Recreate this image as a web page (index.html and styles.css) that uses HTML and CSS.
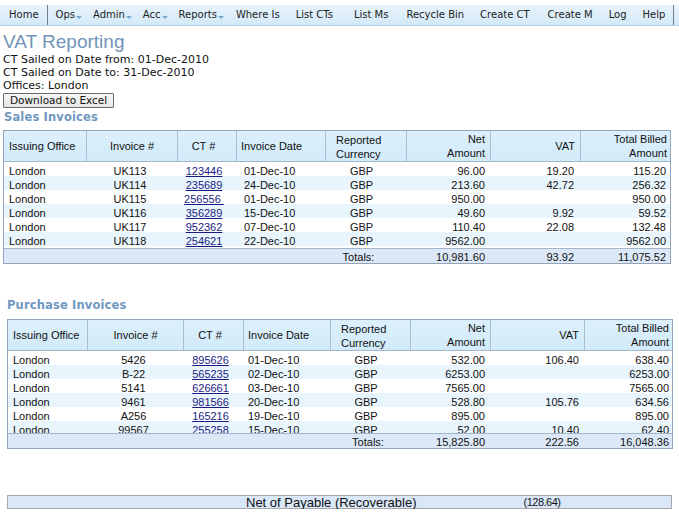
FILE: index.html
```html
<!DOCTYPE html>
<html>
<head>
<meta charset="utf-8">
<link rel="stylesheet" href="styles.css">
</head>
<body>
<div class="nav">
  <span class="ni home">Home</span><span class="sep"></span>
  <span class="ni dd">Ops<i class="caret"></i></span>
  <span class="ni dd">Admin<i class="caret"></i></span>
  <span class="ni dd">Acc<i class="caret"></i></span>
  <span class="ni dd">Reports<i class="caret"></i></span>
  <span class="ni">Where Is</span>
  <span class="ni wide">List CTs</span>
  <span class="ni wide2">List Ms</span>
  <span class="ni">Recycle Bin</span>
  <span class="ni wide2">Create CT</span>
  <span class="ni">Create M</span>
  <span class="ni">Log</span>
  <span class="ni">Help</span><span class="sep"></span>
</div>

<div class="content">
  <h1 class="title">VAT Reporting</h1>
  <div class="info">CT Sailed on Date from: 01-Dec-2010</div>
  <div class="info">CT Sailed on Date to: 31-Dec-2010</div>
  <div class="info">Offices: London</div>
  <button class="btn">Download to Excel</button>
  <h2 class="section">Sales Invoices</h2>

  <div class="tbl sales">
    <div class="row head">
      <div class="c left">Issuing Office</div>
      <div class="c center">Invoice #</div>
      <div class="c center ct">CT #</div>
      <div class="c date">Invoice Date</div>
      <div class="c cur">Reported<br>Currency</div>
      <div class="c right">Net<br>Amount</div>
      <div class="c right">VAT</div>
      <div class="c right last">Total Billed<br>Amount</div>
    </div>
    <div class="body">
      <div class="row"><div class="c left">London</div><div class="c center inv">UK113</div><div class="c center ct"><a href="#">123446</a></div><div class="c date">01-Dec-10</div><div class="c center gbp">GBP</div><div class="c right">96.00</div><div class="c right vat">19.20</div><div class="c right last">115.20</div></div>
      <div class="row"><div class="c left">London</div><div class="c center inv">UK114</div><div class="c center ct"><a href="#">235689</a></div><div class="c date">24-Dec-10</div><div class="c center gbp">GBP</div><div class="c right">213.60</div><div class="c right vat">42.72</div><div class="c right last">256.32</div></div>
      <div class="row"><div class="c left">London</div><div class="c center inv">UK115</div><div class="c center ct"><a href="#">256556&nbsp;</a></div><div class="c date">01-Dec-10</div><div class="c center gbp">GBP</div><div class="c right">950.00</div><div class="c right vat"></div><div class="c right last">950.00</div></div>
      <div class="row"><div class="c left">London</div><div class="c center inv">UK116</div><div class="c center ct"><a href="#">356289</a></div><div class="c date">15-Dec-10</div><div class="c center gbp">GBP</div><div class="c right">49.60</div><div class="c right vat">9.92</div><div class="c right last">59.52</div></div>
      <div class="row"><div class="c left">London</div><div class="c center inv">UK117</div><div class="c center ct"><a href="#">952362</a></div><div class="c date">07-Dec-10</div><div class="c center gbp">GBP</div><div class="c right">110.40</div><div class="c right vat">22.08</div><div class="c right last">132.48</div></div>
      <div class="row"><div class="c left">London</div><div class="c center inv">UK118</div><div class="c center ct"><a href="#">254621</a></div><div class="c date">22-Dec-10</div><div class="c center gbp">GBP</div><div class="c right">9562.00</div><div class="c right vat"></div><div class="c right last">9562.00</div></div>
    </div>
    <div class="row totals">
      <div class="c"></div><div class="c"></div><div class="c"></div><div class="c"></div>
      <div class="c center tlabel">Totals:</div>
      <div class="c right">10,981.60</div>
      <div class="c right vat">93.92</div>
      <div class="c right last">11,075.52</div>
    </div>
  </div>

  <div class="purchase">
    <h2 class="section">Purchase Invoices</h2>
    <div class="tbl pur">
      <div class="row head">
        <div class="c left">Issuing Office</div>
        <div class="c center">Invoice #</div>
        <div class="c center ct">CT #</div>
        <div class="c date">Invoice Date</div>
        <div class="c cur">Reported<br>Currency</div>
        <div class="c right">Net<br>Amount</div>
        <div class="c right">VAT</div>
        <div class="c right last">Total Billed<br>Amount</div>
      </div>
      <div class="body">
        <div class="row"><div class="c left">London</div><div class="c center inv">5426</div><div class="c center ct"><a href="#">895626</a></div><div class="c date">01-Dec-10</div><div class="c center gbp">GBP</div><div class="c right">532.00</div><div class="c right vat">106.40</div><div class="c right last">638.40</div></div>
        <div class="row"><div class="c left">London</div><div class="c center inv">B-22</div><div class="c center ct"><a href="#">565235</a></div><div class="c date">02-Dec-10</div><div class="c center gbp">GBP</div><div class="c right">6253.00</div><div class="c right vat"></div><div class="c right last">6253.00</div></div>
        <div class="row"><div class="c left">London</div><div class="c center inv">5141</div><div class="c center ct"><a href="#">626661</a></div><div class="c date">03-Dec-10</div><div class="c center gbp">GBP</div><div class="c right">7565.00</div><div class="c right vat"></div><div class="c right last">7565.00</div></div>
        <div class="row"><div class="c left">London</div><div class="c center inv">9461</div><div class="c center ct"><a href="#">981566</a></div><div class="c date">20-Dec-10</div><div class="c center gbp">GBP</div><div class="c right">528.80</div><div class="c right vat">105.76</div><div class="c right last">634.56</div></div>
        <div class="row"><div class="c left">London</div><div class="c center inv">A256</div><div class="c center ct"><a href="#">165216</a></div><div class="c date">19-Dec-10</div><div class="c center gbp">GBP</div><div class="c right">895.00</div><div class="c right vat"></div><div class="c right last">895.00</div></div>
        <div class="row"><div class="c left">London</div><div class="c center inv">99567</div><div class="c center ct"><a href="#">255258</a></div><div class="c date">15-Dec-10</div><div class="c center gbp">GBP</div><div class="c right">52.00</div><div class="c right vat">10.40</div><div class="c right last">62.40</div></div>
      </div>
      <div class="row totals">
        <div class="c"></div><div class="c"></div><div class="c"></div><div class="c"></div>
        <div class="c center tlabel">Totals:</div>
        <div class="c right">15,825.80</div>
        <div class="c right vat">222.56</div>
        <div class="c right last">16,048.36</div>
      </div>
    </div>

    <div class="netbar">
      <span class="net-label">Net of Payable (Recoverable)</span>
      <span class="net-value">(128.64)</span>
    </div>
  </div>
</div>
</body>
</html>
```

FILE: styles.css
```css
html, body {
  margin: 0;
  padding: 0;
  background: #ffffff;
}
body {
  font-family: "DejaVu Sans", Verdana, sans-serif;
  font-size: 11px;
  color: #111;
}

/* navigation bar */
.nav {
  margin-top: 5px;
  height: 20px;
  display: flex;
  align-items: center;
  background: linear-gradient(#e7f3fc, #d3e9f7);
  border-bottom: 1px solid #b3d1e6;
  font-size: 10px;
  color: #222;
  white-space: nowrap;
}
.ni {
  padding: 0 8px;
  line-height: 20px;
}
.ni.home { padding-left: 9px; }
.ni.dd { padding-right: 4px; padding-left: 7px; }
.ni.wide { padding-right: 13px; }
.ni.wide2 { padding-right: 10px; }
.caret {
  display: inline-block;
  width: 0;
  height: 0;
  margin-left: 1px;
  border-left: 3px solid transparent;
  border-right: 3px solid transparent;
  border-top: 3px solid #78a8cc;
  vertical-align: -1px;
}
.sep {
  align-self: stretch;
  width: 1px;
  background: #6f7f8c;
}
.sep + .ni.dd { padding-left: 8px; }

.content {
  padding: 0 3px;
}
.title {
  margin: 6px 0 1px;
  font-family: "Liberation Sans", Arial, sans-serif;
  font-weight: normal;
  font-size: 19px;
  line-height: 20px;
  color: #7393b8;
}
.info {
  line-height: 13px;
  font-size: 11px;
}
.btn {
  display: block;
  margin: 1px 0 0;
  padding: 0 6px;
  height: 15px;
  font-family: "DejaVu Sans", Verdana, sans-serif;
  font-size: 10.5px;
  line-height: 13px;
  color: #111;
  background: linear-gradient(#f6f6f6, #e6e6e6);
  border: 1px solid #6b6b6b;
  border-radius: 1px;
}
.section {
  margin: 2px 0 0 1px;
  font-size: 11.5px;
  font-weight: bold;
  letter-spacing: 0.15px;
  line-height: 14px;
  color: #7098bf;
}

/* tables */
.tbl {
  border: 1px solid #92a4b6;
  font-family: "Liberation Sans", Arial, sans-serif;
  font-size: 11px;
  color: #111;
}
.sales {
  margin-top: 6px;
  width: 666px;
  --cols: 83px 91px 59px 89px 81px 84px 90px 89px;
}
.pur {
  margin-top: 7px;
  width: 664px;
  --cols: 80px 96px 60px 87px 80px 80px 94px 87px;
}
.row {
  display: grid;
  grid-template-columns: var(--cols);
  height: 14px;
}
.row .c {
  line-height: 14px;
  padding-top: 2px;
  white-space: nowrap;
}
.body .row:nth-child(even) {
  background: #e9f5fc;
}
.sales .body { height: 86px; overflow: hidden; }
.pur .body { height: 82px; overflow: hidden; }

.head {
  height: 30px;
  background: linear-gradient(#dcf0fc, #d2eaf9);
  border-bottom: 1px solid #a2b8c9;
}
.head .c {
  padding-top: 0;
  display: flex;
  flex-direction: column;
  justify-content: center;
  border-right: 1px solid #a9bfd0;
}
.head .c.last { border-right: 0; }
.head .c.center { align-items: center; }
.head .c.right { align-items: flex-end; }
.head .c.cur { padding-left: 10px; display: block; padding-top: 2px; }
.head .c.date { padding-left: 4px; }

.left { padding-left: 5px; }
.center { text-align: center; }
.right { text-align: right; padding-right: 6px; }
.right.vat { padding-right: 7px; }
.right.last { padding-right: 4px; }
.date { padding-left: 7px; }
.pur .date { padding-left: 4px; }
.ct { padding-right: 7px; }
.inv { padding-right: 5px; }
.gbp { padding-right: 10px; }
.head .c.right { padding-right: 5px; }
.head .c.right.last { padding-right: 3px; }
.pur .right.vat { padding-right: 6px; }
.pur .right.last { padding-right: 3px; }

a {
  color: #1b1b86;
  text-decoration: underline;
}

.totals {
  height: 14px;
  background: #dce8f7;
  border-top: 1px solid #a3b5c7;
}
.totals .c { padding-top: 1px; }
.sales .tlabel { padding-right: 16px; }
.pur .tlabel { padding-right: 6px; }

.purchase {
  padding-left: 4px;
  margin-top: 34px;
}
.purchase .section { margin-left: 0; }

.netbar {
  margin-top: 46px;
  width: 663px;
  height: 12px;
  border: 1px solid #a8a8a8;
  background: #d9e7f8;
  font-family: "Liberation Sans", Arial, sans-serif;
  font-size: 13px;
  line-height: 13px;
  color: #111;
  display: flex;
  white-space: nowrap;
}
.net-label { padding-left: 238px; }
.net-value { padding-left: 107px; font-size: 11px; letter-spacing: -0.5px; }
```
